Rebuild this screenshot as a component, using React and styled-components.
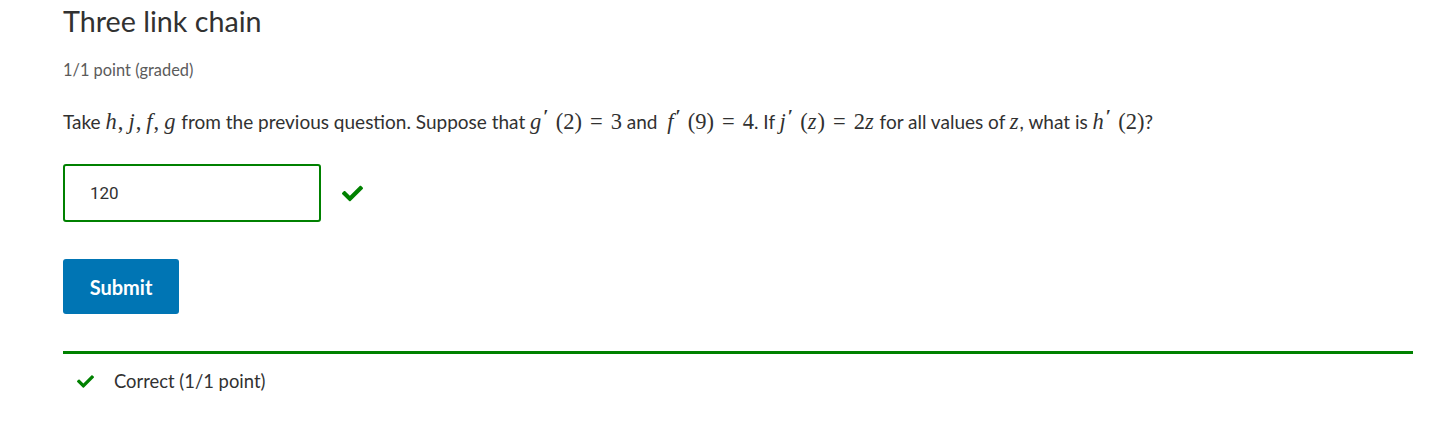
import React from 'react';
import styled, { createGlobalStyle } from 'styled-components';
import { FaCheck } from 'react-icons/fa';

const GlobalStyle = createGlobalStyle`
    body {
        margin: 0;
        background: #fff;
        font-family: Lato, "Open Sans", sans-serif;
        color: #313131;
    }
`;

const Page = styled.div`
    padding: 0 33px 0 63px;
`;

const Title = styled.h3`
    margin: 0;
    padding-top: 5px;
    font-size: 28.7px;
    font-weight: 400;
    line-height: 32px;
    color: #313131;
`;

const Meta = styled.div`
    margin-top: 23px;
    font-size: 16.4px;
    color: #5b5b5b;
    line-height: 20px;
`;

const Question = styled.p`
    margin: 30px 0 0;
    height: 24px;
    font-size: 19px;
    line-height: 24px;
    color: #313131;
    white-space: nowrap;
`;

const MathRun = styled.span`
    font-family: "Liberation Serif", "DejaVu Serif", serif;
    font-size: 22.5px;
    line-height: 0;
`;

const V = styled.i`
    font-style: italic;
    padding-right: 1px;
`;

const Prime = styled.span`
    display: inline-block;
    font-size: 19px;
    font-weight: 700;
    line-height: 0;
    vertical-align: 6px;
    margin: 0 7px 0 1px;
`;

const Rel = styled.span`
    margin: 0 8px;
`;

const Punct = styled.span`
    margin-right: 5px;
`;

const AnswerRow = styled.div`
    display: flex;
    align-items: center;
    gap: 21px;
    margin-top: 30px;
`;

const Input = styled.div`
    box-sizing: border-box;
    width: 258px;
    height: 58px;
    border: 2px solid #008100;
    border-radius: 3px;
    padding: 0 25px;
    display: flex;
    align-items: center;
    font-family: Roboto, "Liberation Sans", sans-serif;
    font-size: 17px;
    color: #313131;
`;

const Check = styled(FaCheck)`
    color: #008100;
    width: ${p => p.$size}px;
    height: ${p => p.$size}px;
    flex: none;
`;

const SubmitButton = styled.button`
    display: block;
    margin-top: 37px;
    width: 116px;
    height: 55px;
    border: none;
    border-radius: 3px;
    background: #0075b4;
    color: #fff;
    font-family: Lato, sans-serif;
    font-weight: 700;
    font-size: 20px;
`;

const Status = styled.div`
    margin-top: 37px;
    border-top: 3px solid #008100;
    display: flex;
    align-items: center;
    gap: 20px;
    padding: 15px 0 0 14px;
    font-size: 18.4px;
    line-height: 24px;
    color: #313131;
`;

export default function App() {
    return (
        <>
            <GlobalStyle />
            <Page>
                <Title>Three link chain</Title>
                <Meta>1/1 point (graded)</Meta>
                <Question>
                    Take <MathRun><V>h</V><Punct>,</Punct><V>j</V><Punct>,</Punct><V>f</V><Punct>,</Punct><V>g</V></MathRun> from the previous question. Suppose that{' '}
                    <MathRun><V>g</V><Prime>′</Prime>(2)<Rel>=</Rel>3</MathRun> and&nbsp; <MathRun><V>f</V><Prime>′</Prime>(9)<Rel>=</Rel>4</MathRun>. If{' '}
                    <MathRun><V>j</V><Prime>′</Prime>(<V>z</V>)<Rel>=</Rel>2<V>z</V></MathRun> for all values of <MathRun><V>z</V></MathRun>, what is{' '}
                    <MathRun><V>h</V><Prime>′</Prime>(2)</MathRun>?
                </Question>
                <AnswerRow>
                    <Input>120</Input>
                    <Check $size={21} />
                </AnswerRow>
                <SubmitButton>Submit</SubmitButton>
                <Status>
                    <Check $size={17} />
                    <span>Correct (1/1 point)</span>
                </Status>
            </Page>
        </>
    );
}
